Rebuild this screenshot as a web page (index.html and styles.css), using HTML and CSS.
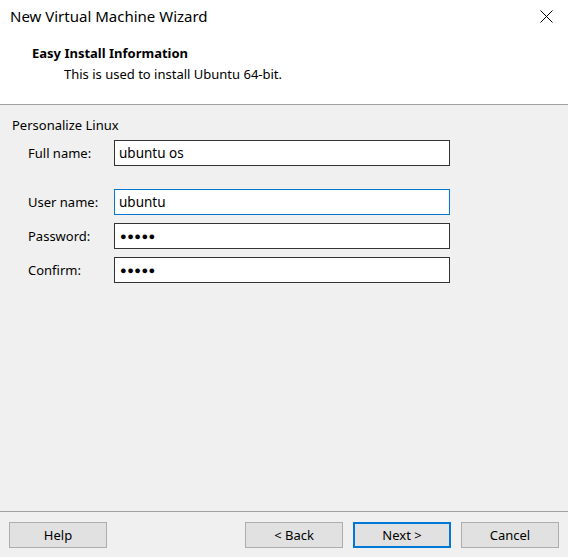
FILE: index.html
```html
<!DOCTYPE html>
<html>
<head>
<meta charset="utf-8">
<title>New Virtual Machine Wizard</title>
<link rel="stylesheet" href="styles.css">
</head>
<body>
<div class="window">
  <div class="header">
    <div class="titlebar">
      <span class="title">New Virtual Machine Wizard</span>
      <button class="close" aria-label="Close">
        <svg width="13" height="13" viewBox="0 0 13 13"><path d="M0.5 0.5 L12.5 12.5 M12.5 0.5 L0.5 12.5" stroke="#000" stroke-width="1" fill="none"/></svg>
      </button>
    </div>
    <div class="heading">Easy Install Information</div>
    <div class="subheading">This is used to install Ubuntu 64-bit.</div>
  </div>
  <div class="content">
    <div class="group-label">Personalize Linux</div>
    <div class="form">
      <div class="row">
        <label class="label">Full name:</label>
        <div class="field">ubuntu os</div>
      </div>
      <div class="row row-gap">
        <label class="label">User name:</label>
        <div class="field focused">ubuntu</div>
      </div>
      <div class="row">
        <label class="label">Password:</label>
        <div class="field dots">●●●●●</div>
      </div>
      <div class="row">
        <label class="label">Confirm:</label>
        <div class="field dots">●●●●●</div>
      </div>
    </div>
  </div>
  <div class="footer">
    <button class="btn">Help</button>
    <div class="spacer"></div>
    <button class="btn">&lt; Back</button>
    <button class="btn default">Next &gt;</button>
    <button class="btn">Cancel</button>
  </div>
</div>
</body>
</html>
```
FILE: styles.css
```css
html, body {
  margin: 0;
  padding: 0;
  background: #f0f0f0;
}
body {
  font-family: "Noto Sans", "Open Sans", sans-serif;
  font-size: 13px;
  color: #000;
}
.window {
  width: 568px;
  height: 557px;
  display: flex;
  flex-direction: column;
  background: #f0f0f0;
}
.header {
  background: #fff;
  border-bottom: 1px solid #a0a0a0;
  box-sizing: border-box;
  height: 105px;
  flex: none;
}
.titlebar {
  height: 34px;
  display: flex;
  align-items: flex-start;
  justify-content: space-between;
}
.title {
  font-size: 15px;
  padding: 6px 0 0 10px;
  line-height: 20px;
}
.close {
  border: none;
  background: transparent;
  padding: 0;
  margin: 10px 15px 0 0;
  width: 13px;
  height: 13px;
  display: flex;
}
.heading {
  font-weight: bold;
  padding-left: 32px;
  margin-top: 9px;
  line-height: 20px;
}
.subheading {
  padding-left: 64px;
  line-height: 20px;
  margin-top: 1px;
}
.content {
  flex: 1;
  padding: 12px 0 0 12px;
}
.group-label {
  line-height: 17px;
}
.form {
  padding-left: 16px;
  margin-top: 6px;
  display: flex;
  flex-direction: column;
  gap: 8px;
}
.row {
  display: flex;
  align-items: center;
}
.row-gap {
  margin-top: 15px;
}
.label {
  width: 86px;
}
.field {
  width: 336px;
  height: 26px;
  box-sizing: border-box;
  border: 1px solid #333;
  background: #fff;
  padding: 0 4px;
  line-height: 24px;
  font-size: 13.5px;
}
.field.focused {
  border-color: #0078d7;
}
.field.dots {
  font-size: 11px;
  letter-spacing: 0.5px;
  padding-left: 5px;
}
.footer {
  flex: none;
  height: 46px;
  box-sizing: border-box;
  border-top: 1px solid #a0a0a0;
  display: flex;
  align-items: flex-start;
  padding: 10px 9px 0 9px;
  gap: 10px;
}
.spacer {
  flex: 1;
}
.btn {
  width: 98px;
  height: 26px;
  box-sizing: border-box;
  background: #e1e1e1;
  border: 1px solid #adadad;
  font-family: inherit;
  font-size: 13px;
  color: #000;
  padding: 0;
}
.btn.default {
  border: 2px solid #0078d7;
}
```
